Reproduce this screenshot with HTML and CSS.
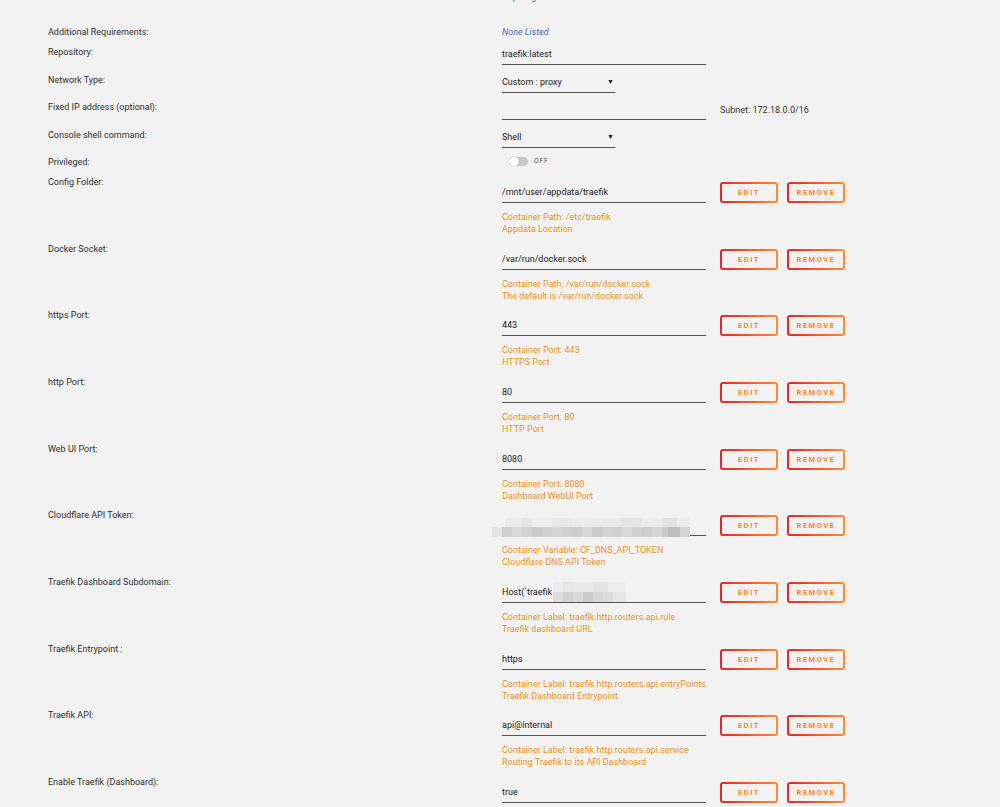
FILE: index.html
```html
<!DOCTYPE html>
<html lang="en">
<head>
    <meta charset="UTF-8">
    <title>Update Container</title>
    <link rel="stylesheet" href="styles.css">
</head>
<body>

    <div class="form">

        <div class="row link-row">
            <div class="label"></div>
            <div class="value"><span class="link">https://github.com/traefik</span></div>
        </div>

        <div class="row plain">
            <div class="label">Additional Requirements:</div>
            <div class="value"><span class="none">None Listed</span></div>
        </div>

        <div class="row simple">
            <div class="label">Repository:</div>
            <div class="value"><div class="field">traefik:latest</div></div>
        </div>

        <div class="row simple">
            <div class="label">Network Type:</div>
            <div class="value"><div class="field select">Custom : proxy <span class="caret">&#9660;</span></div></div>
        </div>

        <div class="row simple">
            <div class="label">Fixed IP address (optional):</div>
            <div class="value inline">
                <div class="field"></div>
                <span class="subnet">Subnet: 172.18.0.0/16</span>
            </div>
        </div>

        <div class="row simple">
            <div class="label">Console shell command:</div>
            <div class="value"><div class="field select">Shell <span class="caret">&#9660;</span></div></div>
        </div>

        <div class="row toggle-row">
            <div class="label">Privileged:</div>
            <div class="value">
                <div class="switch"><span class="knob"></span></div>
                <span class="switch-text">OFF</span>
            </div>
        </div>

        <!-- config entries -->
        <div class="row config">
            <div class="label">Config Folder:</div>
            <div class="value">
                <div class="line">
                    <div class="field">/mnt/user/appdata/traefik</div>
                    <button class="btn">EDIT</button>
                    <button class="btn">REMOVE</button>
                </div>
                <div class="desc">Container Path: /etc/traefik<br>Appdata Location</div>
            </div>
        </div>

        <div class="row config">
            <div class="label">Docker Socket:</div>
            <div class="value">
                <div class="line">
                    <div class="field">/var/run/docker.sock</div>
                    <button class="btn">EDIT</button>
                    <button class="btn">REMOVE</button>
                </div>
                <div class="desc">Container Path: /var/run/docker.sock<br>The default is /var/run/docker.sock</div>
            </div>
        </div>

        <div class="row config">
            <div class="label">https Port:</div>
            <div class="value">
                <div class="line">
                    <div class="field">443</div>
                    <button class="btn">EDIT</button>
                    <button class="btn">REMOVE</button>
                </div>
                <div class="desc">Container Port: 443<br>HTTPS Port</div>
            </div>
        </div>

        <div class="row config">
            <div class="label">http Port:</div>
            <div class="value">
                <div class="line">
                    <div class="field">80</div>
                    <button class="btn">EDIT</button>
                    <button class="btn">REMOVE</button>
                </div>
                <div class="desc">Container Port: 80<br>HTTP Port</div>
            </div>
        </div>

        <div class="row config">
            <div class="label">Web UI Port:</div>
            <div class="value">
                <div class="line">
                    <div class="field">8080</div>
                    <button class="btn">EDIT</button>
                    <button class="btn">REMOVE</button>
                </div>
                <div class="desc">Container Port: 8080<br>Dashboard WebUI Port</div>
            </div>
        </div>

        <div class="row config">
            <div class="label">Cloudflare API Token:</div>
            <div class="value">
                <div class="line">
                    <div class="field hidden-value"><span class="mosaic token"></span></div>
                    <button class="btn">EDIT</button>
                    <button class="btn">REMOVE</button>
                </div>
                <div class="desc">Container Variable: CF_DNS_API_TOKEN<br>Cloudflare DNS API Token</div>
            </div>
        </div>

        <div class="row config">
            <div class="label">Traefik Dashboard Subdomain:</div>
            <div class="value">
                <div class="line">
                    <div class="field hidden-value">Host(`traefik<span class="mosaic host"></span></div>
                    <button class="btn">EDIT</button>
                    <button class="btn">REMOVE</button>
                </div>
                <div class="desc">Container Label: traefik.http.routers.api.rule<br>Traefik dashboard URL</div>
            </div>
        </div>

        <div class="row config">
            <div class="label">Traefik Entrypoint :</div>
            <div class="value">
                <div class="line">
                    <div class="field">https</div>
                    <button class="btn">EDIT</button>
                    <button class="btn">REMOVE</button>
                </div>
                <div class="desc">Container Label: traefik.http.routers.api.entryPoints<br>Traefik Dashboard Entrypoint</div>
            </div>
        </div>

        <div class="row config">
            <div class="label">Traefik API:</div>
            <div class="value">
                <div class="line">
                    <div class="field">api@internal</div>
                    <button class="btn">EDIT</button>
                    <button class="btn">REMOVE</button>
                </div>
                <div class="desc">Container Label: traefik.http.routers.api.service<br>Routing Traefik to its API Dashboard</div>
            </div>
        </div>

        <div class="row config">
            <div class="label">Enable Traefik (Dashboard):</div>
            <div class="value">
                <div class="line">
                    <div class="field">true</div>
                    <button class="btn">EDIT</button>
                    <button class="btn">REMOVE</button>
                </div>
            </div>
        </div>

    </div>

</body>
</html>
```

FILE: styles.css
```css
/* General page */
body {
    margin: 0;
    background: #f2f2f2;
    font-family: Roboto, 'Open Sans', sans-serif;
    font-size: 9px;
    color: #2e2e2e;
    overflow: hidden;
}

.form {
    padding-left: 48px;
}

/* Rows: label column + value column */
.row {
    display: grid;
    grid-template-columns: 454px 1fr;
    align-items: start;
}

.label {
    line-height: 12px;
    padding-top: 2px;
}

.value {
    line-height: 12px;
}

.link-row {
    margin-top: -9px;
    height: 33px;
}

.link {
    color: #486dba;
}

.plain {
    height: 20px;
}

.plain .value {
    padding-top: 2px;
}

.none {
    color: #486dba;
    font-style: italic;
}

.simple {
    height: 27.5px;
}

.toggle-row {
    height: 21px;
}

.config {
    height: 66.67px;
}

.config .label {
    padding-top: 1px;
}

/* Inputs */
.field {
    position: relative;
    box-sizing: border-box;
    width: 204px;
    height: 21px;
    display: flex;
    align-items: center;
    border-bottom: 1px solid #555;
    color: #222;
}

.field.select {
    width: 113px;
    justify-content: space-between;
    padding-right: 1px;
}

.caret {
    font-size: 7px;
    color: #222;
}

.value.inline {
    display: flex;
    align-items: center;
}

.subnet {
    margin-left: 14px;
    color: #333;
}

/* Toggle switch */
.toggle-row .value {
    display: flex;
    align-items: center;
    padding-left: 7px;
    margin-top: 1px;
}

.switch {
    position: relative;
    width: 19px;
    height: 9px;
    border-radius: 5px;
    background: #c8c8c8;
}

.knob {
    position: absolute;
    left: 0;
    top: 0;
    width: 10px;
    height: 9px;
    border-radius: 5px;
    background: #fff;
    box-shadow: 0 0 1px rgba(0, 0, 0, 0.45);
}

.switch-text {
    margin-left: 6px;
    font-size: 7px;
    letter-spacing: 0.6px;
    color: #555;
}

/* Config entries */
.line {
    display: flex;
    align-items: center;
    margin-top: 7px;
}

.btn {
    box-sizing: border-box;
    width: 58px;
    height: 21px;
    margin-left: 14px;
    padding: 0;
    border: 2px solid transparent;
    border-radius: 3px;
    background: linear-gradient(#f2f2f2, #f2f2f2) padding-box,
                linear-gradient(90deg, #e22828, #ff8c2f) border-box;
    font-family: Roboto, sans-serif;
    font-size: 7.5px;
    font-weight: bold;
    letter-spacing: 1.5px;
    color: #f7852c;
    cursor: pointer;
}

.btn + .btn {
    margin-left: 9px;
}

.desc {
    margin-top: 7px;
    padding-top: 1px;
    color: #ec9320;
}

/* Blurred values */
.mosaic {
    position: absolute;
}

.mosaic.token {
    left: -10px;
    top: 3px;
    width: 198px;
    height: 20px;
    background:
        linear-gradient(90deg, transparent 0 13px, #ebebeb 13px 30px, #e6e6e6 30px 40px, #efefef 40px 60px, #e8e8e8 60px 80px,
            #ececec 80px 100px, #e9e9e9 100px 130px, #e5e5e5 130px 150px, #ebebeb 150px 170px, #e3e3e3 170px 185px, #ececec 185px 198px)
            0 0 / 100% 9px no-repeat,
        linear-gradient(90deg, #e6e6e6 0 10px, #d0d0d0 10px 20px, #dadada 20px 30px, #d3d3d3 30px 40px, #cbcbcb 40px 50px,
            #cfcfcf 50px 60px, #d6d6d6 60px 70px, #d1d1d1 70px 80px, #cdcdcd 80px 90px, #d8d8d8 90px 100px,
            #cacaca 100px 110px, #d4d4d4 110px 120px, #d0d0d0 120px 130px, #d9d9d9 130px 140px, #d2d2d2 140px 150px,
            #cecece 150px 160px, #d6d6d6 160px 170px, #cacaca 170px 176px, #bdbdbd 176px 188px, #d6d6d6 188px 198px)
            0 9px / 100% 10px no-repeat;
}

.mosaic.host {
    left: 51px;
    top: 0;
    width: 73px;
    height: 20px;
    background:
        linear-gradient(90deg, #ececec 0 10px, #e6e6e6 10px 20px, #e9e9e9 20px 40px, #e4e4e4 40px 55px, #eeeeee 55px 73px)
            0 0 / 100% 10px no-repeat,
        linear-gradient(90deg, #dedede 0 10px, #d2d2d2 10px 20px, #dadada 20px 30px, #cdcdcd 30px 40px, #d6d6d6 40px 50px,
            #dcdcdc 50px 60px, #e6e6e6 60px 73px)
            0 10px / 100% 10px no-repeat;
}
```
